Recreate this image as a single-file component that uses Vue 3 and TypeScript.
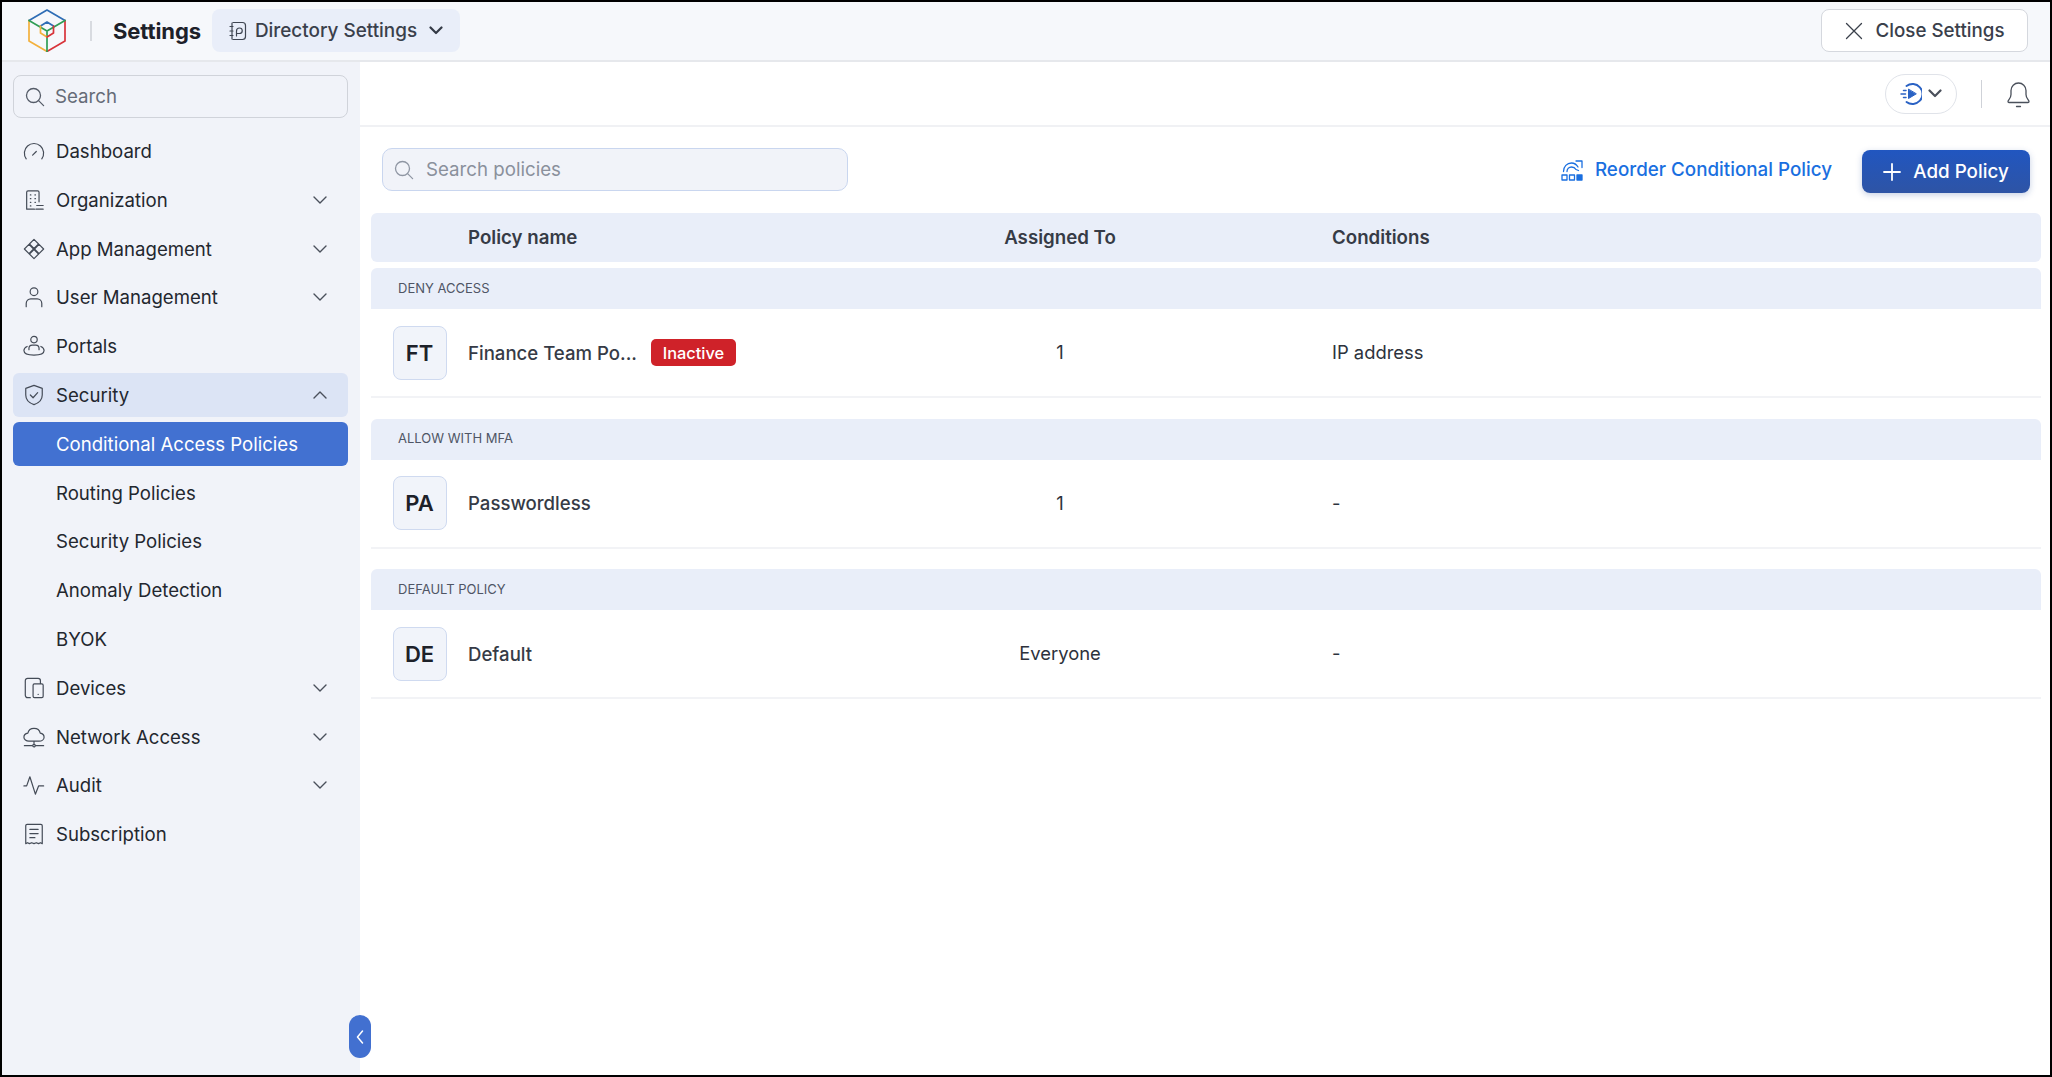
<script setup lang="ts">
interface NavItem {
  label: string
  icon?: string
  state?: 'active' | 'sub'
}

const nav: NavItem[] = [
  { label: 'Dashboard', icon: 'M3.5 20.5A10.5 10.5 0 1 1 20.5 20.5M10.5 16.5l4-4' },
  { label: 'Organization', icon: 'M4 22V3.5A1.5 1.5 0 0 1 5.5 2H16A1.5 1.5 0 0 1 17.5 3.5V14M4 22h8.5M15 18h7M14 22h8M8 6.5h.6M13 6.5h.6M8 10.5h.6M13 10.5h.6M8 14.5h.6M13 14.5h.6M8 18.5h.6' },
  { label: 'App Management', icon: 'M12 1.5 17 6.5 12 11.5 7 6.5ZM6.5 7 11.5 12 6.5 17 1.5 12ZM17.5 7 22.5 12 17.5 17 12.5 12ZM12 12.5 17 17.5 12 22.5 7 17.5Z' },
  { label: 'User Management', icon: 'M12 2a4.2 4.2 0 1 1 0 8.4A4.2 4.2 0 0 1 12 2ZM3.5 22.5V19a5 5 0 0 1 5-5h7a5 5 0 0 1 5 5v3.5' },
  { label: 'Portals', icon: 'M12 1.5a3.5 3.5 0 1 1 0 7 3.5 3.5 0 0 1 0-7ZM6.5 16v-1.5a3.5 3.5 0 0 1 3.5-3.5h4a3.5 3.5 0 0 1 3.5 3.5V16M4.5 12.5c-2 .8-3.5 2.2-3.5 4.5 0 3 4.5 5 11 5s11-2 11-5c0-2.3-1.5-3.7-3.5-4.5' },
  { label: 'Security', icon: 'M12 1.5l9 3.3v7.2c0 5-3.5 8.7-9 10.5-5.5-1.8-9-5.500-9-10.500V4.800ZM8 12l3 3 5-5.500' },
  { label: 'Conditional Access Policies', state: 'active' },
  { label: 'Routing Policies', state: 'sub' },
  { label: 'Security Policies', state: 'sub' },
  { label: 'Anomaly Detection', state: 'sub' },
  { label: 'BYOK', state: 'sub' },
  { label: 'Devices', icon: 'M8 22.5H5A2.5 2.5 0 0 1 2.500 20V4A2.500 2.500 0 0 1 5 1.500h11.500A2.500 2.500 0 0 1 19 4v3M12.500 7.500h8A1.500 1.500 0 0 1 22 9v12a1.500 1.500 0 0 1-1.500 1.500h-8A1.500 1.500 0 0 1 11 21V9a1.500 1.500 0 0 1 1.500-1.500ZM16.500 19h.1' },
  { label: 'Network Access', icon: 'M6.500 16.500c-3 0-5.500-1.800-5.500-4.300 0-2.200 1.800-4 4.300-4.400C6 4.500 8.800 2.500 12 2.500c3.500 0 6.200 2.200 6.800 5.300 2.400.4 4.200 2.200 4.200 4.400 0 2.500-2.500 4.300-5.500 4.300ZM12 16.500v3M1.500 21.500h8M14.500 21.500h8M12 20a1.400 1.400 0 1 1 0 2.800 1.400 1.400 0 0 1 0-2.800' },
  { label: 'Audit', icon: 'M1 13h3l3.500-10 6 19 3.500-9h5.500' },
  { label: 'Subscription', icon: 'M3 22.500V3A1.500 1.500 0 0 1 4.500 1.500h15A1.500 1.500 0 0 1 21 3v19.500l-2-1-2 1-2.500-1-2.500 1-2.500-1-2.500 1-2-1ZM7.500 7h9M7.500 11.500h9M7.500 16h5.500' },
]

const chevrons: Record<string, 'down' | 'up'> = {
  Organization: 'down',
  'App Management': 'down',
  'User Management': 'down',
  Security: 'up',
  Devices: 'down',
  'Network Access': 'down',
  Audit: 'down',
}

const groups = [
  { title: 'DENY ACCESS', code: 'FT', name: 'Finance Team Po...', inactive: true, assigned: '1', conditions: 'IP address' },
  { title: 'ALLOW WITH MFA', code: 'PA', name: 'Passwordless', inactive: false, assigned: '1', conditions: '-' },
  { title: 'DEFAULT POLICY', code: 'DE', name: 'Default', inactive: false, assigned: 'Everyone', conditions: '-' },
]
</script>

<template>
  <div class="frame">
    <header class="topbar">
      <svg class="logo" viewBox="0 0 38 43" fill="none" stroke-width="1.700" stroke-linejoin="round" stroke-linecap="round">
        <path d="M1 11.500 19 1l18 10.500" stroke="#2e6db5" />
        <path d="M1 11.500V32l18 10.500" stroke="#f3b13c" />
        <path d="M37 11.500V32L19 42.500" stroke="#d8343a" />
        <path d="M1 11.500 19 22l18-10.500M19 22v20.500" stroke="#2f9e55" />
        <path d="M12.500 17 19 13l6.500 4" stroke="#2e6db5" />
        <path d="M12.500 17v7l6.500 4" stroke="#f3b13c" />
        <path d="M25.500 17v7l-6.500 4" stroke="#d8343a" />
      </svg>
      <span class="top-divider"></span>
      <span class="title">Settings</span>
      <button class="dir-btn">
        <svg class="dir-icon" viewBox="0 0 18 20" fill="none" stroke="#3f4652" stroke-width="1.200" stroke-linecap="round">
          <path d="M4 1.500h9.500a3 3 0 0 1 3 3v11a3 3 0 0 1-3 3H4M1 5.500h3M1 10h3M1 14.500h3M3 2v16M7.500 15v-5a3 3 0 0 1 3-3 2.500 2.500 0 0 1 0 5.500H7.500" />
        </svg>
        <span>Directory Settings</span>
        <svg class="dir-chev" viewBox="0 0 14 9" fill="none" stroke="#343a46" stroke-width="2.200" stroke-linecap="round" stroke-linejoin="round">
          <path d="M1.500 1.500 7 7l5.500-5.500" />
        </svg>
      </button>
      <button class="close-btn">
        <svg class="close-icon" viewBox="0 0 18 18" fill="none" stroke="#3a404b" stroke-width="1.300" stroke-linecap="round">
          <path d="M1.500 1.500l15 15M16.500 1.500l-15 15" />
        </svg>
        <span>Close Settings</span>
      </button>
    </header>

    <div class="body">
      <aside class="sidebar">
        <label class="side-search">
          <svg class="search-icon" viewBox="0 0 20 20" fill="none" stroke="#555c68" stroke-width="1.300" stroke-linecap="round">
            <circle cx="8.500" cy="8.500" r="7" />
            <path d="M13.600 13.600l5 5" />
          </svg>
          <input placeholder="Search" />
        </label>
        <nav class="nav">
          <div
            v-for="item in nav"
            :key="item.label"
            class="nav-row"
            :class="[item.state, { open: chevrons[item.label] === 'up' }]"
          >
            <svg v-if="item.icon" class="nav-icon" viewBox="0 0 24 24" fill="none" stroke="#444b57" stroke-width="1.300" stroke-linecap="round" stroke-linejoin="round">
              <path :d="item.icon" />
            </svg>
            <span class="nav-label">{{ item.label }}</span>
            <svg v-if="chevrons[item.label]" class="nav-chev" viewBox="0 0 14 8" fill="none" stroke="#4a505b" stroke-width="1.400" stroke-linecap="round" stroke-linejoin="round">
              <path :d="chevrons[item.label] === 'down' ? 'M1 1l6 6 6-6' : 'M1 7l6-6 6 6'" />
            </svg>
          </div>
        </nav>
      </aside>

      <button class="collapse" aria-label="Collapse">
        <svg viewBox="0 0 8 14" fill="none" stroke="#fff" stroke-width="1.500" stroke-linecap="round" stroke-linejoin="round">
          <path d="M6.500 1 1.500 7l5 6" />
        </svg>
      </button>

      <main class="main">
        <div class="main-head">
          <div class="pill">
            <svg class="play" viewBox="0 0 22 22" fill="none" stroke="#2a62c4" stroke-width="1.900" stroke-linecap="round">
              <path d="M6.500 3A10 10 0 1 1 6.500 19" />
              <path d="M8.500 6.500v9l7.500-4.500Z" fill="#2a62c4" stroke-linejoin="round" stroke-width="1" />
              <path d="M3.500 7.500h2.500M1 11h4.500M3.500 14.500h2.500" stroke-width="1.500" />
            </svg>
            <svg class="pill-chev" viewBox="0 0 14 9" fill="none" stroke="#4a505b" stroke-width="2.200" stroke-linecap="round" stroke-linejoin="round">
              <path d="M1.500 1.500 7 7l5.500-5.500" />
            </svg>
          </div>
          <span class="head-divider"></span>
          <svg class="bell" viewBox="0 0 23 26" fill="none" stroke="#4a505b" stroke-width="1.300" stroke-linecap="round" stroke-linejoin="round">
            <path d="M1 19.500c0-1.500 3-3 3-7V8.500a7.500 7.500 0 0 1 15 0V12.500c0 4 3 5.500 3 7 0 .6-.4 1-1 1H2c-.6 0-1-.4-1-1ZM9.500 24.500h4" />
          </svg>
        </div>

        <section class="content">
          <div class="toolbar">
            <label class="policy-search">
              <svg class="search-icon" viewBox="0 0 20 20" fill="none" stroke="#8f96a3" stroke-width="1.300" stroke-linecap="round">
                <circle cx="8.500" cy="8.500" r="7" />
                <path d="M13.600 13.600l5 5" />
              </svg>
              <input placeholder="Search policies" />
            </label>
            <a class="reorder">
              <svg class="reorder-icon" viewBox="0 0 22 22" fill="none" stroke="#1a6fe0" stroke-width="1.300" stroke-linecap="round" stroke-linejoin="round">
                <path d="M2.500 12.500c0-5 3.500-8.500 8-8.500 3 0 5 1.500 6.500 4M6 12.500c0-2.500 2-4.500 4.500-4.500 2 0 3.500.8 4.500 2.500l2.500 1M15 2h6v6.500" />
                <rect x="1" y="16" width="5" height="5" />
                <rect x="8.500" y="16" width="5" height="5" />
                <rect x="16" y="16" width="5" height="5" fill="#1a6fe0" />
              </svg>
              <span>Reorder Conditional Policy</span>
            </a>
            <button class="add-btn">
              <svg class="plus" viewBox="0 0 18 18" fill="none" stroke="#fff" stroke-width="1.800" stroke-linecap="round">
                <path d="M9 1v16M1 9h16" />
              </svg>
              <span>Add Policy</span>
            </button>
          </div>

          <div class="grid thead">
            <span></span>
            <span>Policy name</span>
            <span class="center">Assigned To</span>
            <span>Conditions</span>
          </div>

          <div v-for="g in groups" :key="g.title" class="group">
            <div class="band">{{ g.title }}</div>
            <div class="grid row">
              <span class="avatar">{{ g.code }}</span>
              <span class="name">
                <span>{{ g.name }}</span>
                <span v-if="g.inactive" class="badge">Inactive</span>
              </span>
              <span class="center cell">{{ g.assigned }}</span>
              <span class="cell">{{ g.conditions }}</span>
            </div>
          </div>
        </section>
      </main>
    </div>
  </div>
</template>

<style>
html, body { margin: 0; padding: 0; background: #fff; }
</style>

<style scoped>
.frame {
  box-sizing: border-box;
  width: 2052px;
  height: 1077px;
  border: 2px solid #000;
  display: flex;
  flex-direction: column;
  font-family: Inter, "Liberation Sans", sans-serif;
  color: #23272f;
  background: #fff;
  overflow: hidden;
}
button { font-family: inherit; cursor: pointer; }
input {
  flex: 1;
  min-width: 0;
  border: 0;
  outline: 0;
  background: transparent;
  font-family: inherit;
  font-size: 18.7px;
  padding: 0;
}

.topbar {
  height: 60px;
  flex: none;
  box-sizing: border-box;
  display: flex;
  align-items: center;
  padding: 0 22px 1px 26px;
  background: #f6f8fb;
  border-bottom: 2px solid #e6e8ec;
}
.logo { width: 38px; height: 43px; flex: none; }
.top-divider { width: 2px; height: 20px; background: #d8dbe0; margin: 0 21px 0 24px; }
.title { font-size: 22px; font-weight: 700; color: #1d2129; letter-spacing: -.1px; }
.dir-btn {
  height: 43px;
  box-sizing: border-box;
  margin-left: 11px;
  display: flex;
  align-items: center;
  gap: 8px;
  padding: 0 17px;
  border: 0;
  border-radius: 8px;
  background: #e9eef9;
  color: #3a404b;
  font-size: 18.9px;
  font-weight: 500;
}
.dir-icon { width: 18px; height: 20px; }
.dir-chev { width: 14px; height: 9px; margin-left: 4px; }
.close-btn {
  margin-left: auto;
  height: 43px;
  width: 207px;
  box-sizing: border-box;
  display: flex;
  align-items: center;
  justify-content: center;
  gap: 13px;
  border: 1px solid #d5d8de;
  border-radius: 8px;
  background: #fff;
  color: #3a404b;
  font-size: 18.75px;
  font-weight: 500;
}
.close-icon { width: 18px; height: 18px; }

.body { flex: 1; min-height: 0; display: flex; position: relative; }

.sidebar {
  width: 358px;
  flex: none;
  box-sizing: border-box;
  background: #f1f3f9;
  padding: 13px 12px 0 11px;
}
.side-search {
  height: 43px;
  box-sizing: border-box;
  display: flex;
  align-items: center;
  gap: 10px;
  padding: 0 11px;
  border: 1px solid #d0d3da;
  border-radius: 8px;
}
.side-search input { color: #5e6470; }
.side-search input::placeholder { color: #656b77; opacity: 1; }
.search-icon { width: 20px; height: 20px; flex: none; }

.nav { display: flex; flex-direction: column; gap: 4.8px; margin-top: 11px; }
.nav-row {
  height: 44px;
  box-sizing: border-box;
  display: flex;
  align-items: center;
  gap: 11px;
  padding: 0 21px 0 10px;
  border-radius: 6px;
  font-size: 18.6px;
  color: #23272f;
}
.nav-icon { width: 22px; height: 22px; flex: none; }
.nav-chev { width: 14px; height: 8px; margin-left: auto; }
.nav-row.sub, .nav-row.active { padding-left: 43px; }
.nav-row.open { background: #dce4f5; }
.nav-row.active { background: #4271d1; color: #fff; }

.collapse {
  position: absolute;
  left: 347px;
  bottom: 17px;
  width: 22px;
  height: 43px;
  padding: 0;
  border: 0;
  border-radius: 11px;
  background: #4270d0;
  display: flex;
  align-items: center;
  justify-content: center;
}
.collapse svg { width: 8px; height: 14px; }

.main { flex: 1; min-width: 0; display: flex; flex-direction: column; }
.main-head {
  height: 65px;
  flex: none;
  box-sizing: border-box;
  display: flex;
  align-items: center;
  justify-content: flex-end;
  padding: 0 20px 0 0;
  border-bottom: 2px solid #f0f1f4;
}
.pill {
  width: 72px;
  height: 40px;
  box-sizing: border-box;
  display: flex;
  align-items: center;
  justify-content: center;
  gap: 6px;
  border: 1px solid #e0e3e9;
  border-radius: 20px;
}
.play { width: 22px; height: 22px; }
.pill-chev { width: 14px; height: 9px; }
.head-divider { width: 1px; height: 28px; background: #cfd2d8; margin: 0 25px 0 24px; }
.bell { width: 23px; height: 26px; margin-top: 2px; }

.content { padding: 0 9px 0 11px; }
.toolbar {
  height: 86px;
  box-sizing: border-box;
  display: flex;
  align-items: center;
  padding: 0 11px 1px 11px;
}
.policy-search {
  width: 466px;
  height: 43px;
  box-sizing: border-box;
  display: flex;
  align-items: center;
  gap: 12px;
  padding: 0 11px;
  background: #f1f3f9;
  border: 1.5px solid #c9d6ef;
  border-radius: 10px;
}
.policy-search input::placeholder { color: #8a909c; opacity: 1; }
.reorder {
  margin-left: auto;
  display: flex;
  align-items: center;
  gap: 12px;
  color: #1a6fe0;
  font-size: 18.8px;
  font-weight: 500;
}
.reorder-icon { width: 22px; height: 22px; }
.add-btn {
  margin: 4px 0 0 30px;
  width: 168px;
  height: 43px;
  box-sizing: border-box;
  display: flex;
  align-items: center;
  justify-content: center;
  gap: 12px;
  border: 0;
  border-radius: 8px;
  background: linear-gradient(#2156c0, #2e54a5);
  box-shadow: 0 2px 6px rgba(33, 70, 150, .25);
  color: #fff;
  font-size: 18.8px;
  font-weight: 500;
}
.plus { width: 18px; height: 18px; }

.grid {
  display: grid;
  grid-template-columns: 97px 320px 544px 1fr;
  align-items: center;
}
.center { text-align: center; }
.thead {
  height: 49px;
  background: #e9eef9;
  border-radius: 6px;
  font-size: 18.7px;
  font-weight: 600;
  color: #363b46;
  margin-bottom: 6px;
}
.group { margin-bottom: 20.5px; }
.band {
  height: 41px;
  box-sizing: border-box;
  display: flex;
  align-items: center;
  padding: 0 0 2px 27px;
  background: #e9eef9;
  border-radius: 6px 6px 0 0;
  font-size: 13px;
  color: #4f5565;
}
.row {
  height: 89px;
  box-sizing: border-box;
  border-bottom: 2px solid #f2f3f6;
}
.avatar {
  width: 54px;
  height: 54px;
  box-sizing: border-box;
  margin-left: 21.5px;
  display: flex;
  align-items: center;
  justify-content: center;
  background: #f1f4fa;
  border: 1.5px solid #cfdaf0;
  border-radius: 8px;
  font-size: 22px;
  font-weight: 600;
  color: #1d2129;
}
.name {
  display: flex;
  align-items: center;
  gap: 14px;
  font-size: 18.6px;
  font-weight: 500;
  color: #363b46;
}
.badge {
  height: 27px;
  width: 85px;
  box-sizing: border-box;
  display: flex;
  align-items: center;
  justify-content: center;
  background: #cf2229;
  border-radius: 5px;
  color: #fff;
  font-size: 16.4px;
  font-weight: 500;
}
.cell { font-size: 18.4px; color: #2d323c; padding-bottom: 1px; }
</style>
